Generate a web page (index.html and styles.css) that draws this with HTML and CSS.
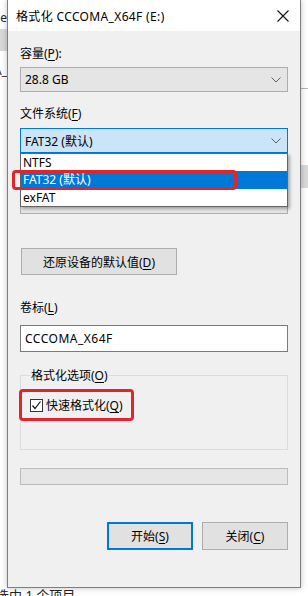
FILE: index.html
```html
<!DOCTYPE html>
<html lang="zh-CN">
<head>
    <meta charset="UTF-8">
    <meta name="viewport" content="width=device-width, initial-scale=1.0">
    <title>格式化 CCCOMA_X64F (E:)</title>
    <link rel="stylesheet" href="styles.css">
</head>
<body>
    <div class="screen">
        <div class="behind behind-left">
            <div class="peek peek-top">Type</div>
            <div class="peek-band"></div>
            <div class="peek peek-name">CCCOMA_</div>
        </div>

        <div class="dialog">
            <div class="titlebar">
                <span class="title">格式化 CCCOMA_X64F (E:)</span>
                <svg class="close" width="12" height="12" viewBox="0 0 12 12">
                    <path d="M0.5 0.5 L11.5 11.5 M11.5 0.5 L0.5 11.5" stroke="#111" stroke-width="1.1" fill="none"/>
                </svg>
            </div>

            <div class="content">
                <div class="label first">容量(<u>P</u>):</div>
                <div class="combo">
                    <span>28.8 GB</span>
                    <svg class="chevron" width="10" height="6" viewBox="0 0 10 6">
                        <polyline points="0.5,0.5 5,5 9.5,0.5" stroke="#606060" stroke-width="1" fill="none"/>
                    </svg>
                </div>

                <div class="label">文件系统(<u>F</u>)</div>
                <div class="combo-wrap">
                    <div class="combo focused">
                        <span>FAT32 (默认)</span>
                        <svg class="chevron" width="10" height="6" viewBox="0 0 10 6">
                            <polyline points="0.5,0.5 5,5 9.5,0.5" stroke="#606060" stroke-width="1" fill="none"/>
                        </svg>
                    </div>
                    <ul class="droplist">
                        <li>NTFS</li>
                        <li class="selected">FAT32 (默认)</li>
                        <li>exFAT</li>
                    </ul>
                </div>

                <!-- allocation unit row, covered by the open list -->
                <div class="label hidden-row"></div>
                <div class="combo"></div>

                <button class="btn restore">还原设备的默认值(<u>D</u>)</button>

                <div class="label spaced">卷标(<u>L</u>)</div>
                <div class="textbox">CCCOMA_X64F</div>

                <fieldset class="options">
                    <legend>格式化选项(<u>O</u>)</legend>
                    <label class="check-row">
                        <span class="checkbox">
                            <svg width="11" height="11" viewBox="0 0 11 11">
                                <polyline points="1.5,5.5 4,8.5 9.5,1.5" stroke="#111" stroke-width="1.2" fill="none"/>
                            </svg>
                        </span>
                        <span>快速格式化(<u>Q</u>)</span>
                    </label>
                </fieldset>

                <div class="progress"></div>

                <div class="actions">
                    <button class="btn default">开始(<u>S</u>)</button>
                    <button class="btn">关闭(<u>C</u>)</button>
                </div>
            </div>
        </div>

        <div class="behind behind-right">
            <div class="peek-line"></div>
            <div class="peek-band right"></div>
        </div>
    </div>
    <div class="status">选中 1 个项目</div>
</body>
</html>
```

FILE: styles.css
```css
body {
    margin: 0;
    width: 308px;
    height: 596px;
    overflow: hidden;
    background-color: #fff;
    font-family: 'Noto Sans', 'Noto Sans CJK SC', sans-serif;
    font-size: 12px;
    color: #000;
}

u {
    text-decoration-thickness: 1px;
    text-underline-offset: 2px;
}

.screen {
    display: flex;
    height: 588px;
}

.behind {
    width: 7px;
    overflow: hidden;
    background-color: #fff;
}

.behind-left {
    display: flex;
    flex-direction: column;
    align-items: flex-end;
}

.peek {
    white-space: nowrap;
    line-height: 14px;
    color: #222;
}

.peek-top {
    margin-top: 11px;
}

.peek-band {
    width: 100%;
    height: 22px;
    margin-top: 4px;
    background-color: #d9d9d9;
}

.peek-name {
    margin-top: 13px;
}

.peek-line {
    height: 1px;
    margin-top: 88px;
    background-color: #b5b5b5;
}

.peek-band.right {
    height: 23px;
    margin-top: 76px;
    background-color: #d9d9d9;
}

.dialog {
    width: 292px;
    display: flex;
    flex-direction: column;
    border: 1px solid #7f7f7f;
    border-top: none;
    box-shadow: 0 0 6px rgba(0, 0, 0, 0.25);
    z-index: 1;
}

.titlebar {
    height: 31px;
    flex-shrink: 0;
    display: flex;
    align-items: center;
    justify-content: space-between;
    padding: 0 11px 0 8px;
    background-color: #fff;
}

.title {
    font-size: 12px;
    letter-spacing: 0.35px;
}

.close {
    margin-top: 1px;
}

.content {
    flex: 1;
    display: flex;
    flex-direction: column;
    padding: 0 12px;
    background-color: #f0f0f0;
}

.label {
    height: 15px;
    line-height: 15px;
    margin-top: 14px;
    margin-bottom: 7px;
}

.label.first {
    margin-top: 15px;
    margin-bottom: 6px;
}

.label.spaced {
    margin-top: 25px;
    margin-bottom: 10px;
}

.combo {
    height: 25px;
    box-sizing: border-box;
    display: flex;
    align-items: center;
    justify-content: space-between;
    padding: 0 6px 0 4px;
    background-color: #e5e5e5;
    border: 1px solid #adadad;
}

.combo.focused {
    background-color: #cce4f7;
    border-color: #0078d7;
}

.combo-wrap {
    position: relative;
}

.droplist {
    position: absolute;
    top: 100%;
    left: 0;
    right: 0;
    margin: 0;
    padding: 0;
    list-style: none;
    background-color: #fff;
    border: 1px solid #646464;
    box-shadow: 2px 2px 3px rgba(0, 0, 0, 0.3);
    z-index: 2;
}

.droplist li {
    height: 17px;
    line-height: 17px;
    padding-left: 2px;
}

.droplist li.selected {
    position: relative;
    height: 18px;
    line-height: 18px;
    background-color: #0078d7;
    color: #fff;
}

.droplist li.selected::after {
    content: '';
    position: absolute;
    left: -9px;
    top: -1px;
    width: 225px;
    height: 20px;
    box-sizing: border-box;
    border: 3px solid #e2252a;
    border-radius: 4px;
}

.btn {
    height: 28px;
    box-sizing: border-box;
    padding: 0;
    font-family: inherit;
    font-size: 12px;
    color: #000;
    background-color: #e1e1e1;
    border: 1px solid #adadad;
}

.btn.restore {
    width: 156px;
    height: 27px;
    margin: 34px 0 0 1px;
}

.btn.default {
    border: 2px solid #0078d7;
}

.textbox {
    height: 27px;
    box-sizing: border-box;
    display: flex;
    align-items: center;
    padding-left: 4px;
    letter-spacing: 0.5px;
    background-color: #fff;
    border: 1px solid #7a7a7a;
}

.options {
    margin: 16px 0 0;
    padding: 0 9px 35px;
    border: 1px solid #dcdcdc;
}

.options legend {
    padding: 0 1px;
    line-height: 15px;
    margin-left: 0;
}

.check-row {
    position: relative;
    height: 18px;
    margin-top: 13px;
    display: flex;
    align-items: center;
    gap: 3px;
}

.check-row::after {
    content: '';
    position: absolute;
    left: -11px;
    top: -7px;
    width: 115px;
    height: 32px;
    box-sizing: border-box;
    border: 3px solid #e2252a;
    border-radius: 4px;
}

.checkbox {
    width: 13px;
    height: 13px;
    box-sizing: border-box;
    display: flex;
    align-items: center;
    justify-content: center;
    background-color: #fff;
    border: 1px solid #333;
}

.progress {
    height: 17px;
    margin-top: 18px;
    box-sizing: border-box;
    background-color: #e6e6e6;
    border: 1px solid #bcbcbc;
}

.actions {
    display: flex;
    justify-content: flex-end;
    gap: 9px;
    margin-top: 37px;
}

.actions .btn {
    width: 86px;
}

.status {
    margin: 0 0 0 -4px;
    line-height: 14px;
    font-size: 13px;
    color: #222;
    white-space: nowrap;
}
```
